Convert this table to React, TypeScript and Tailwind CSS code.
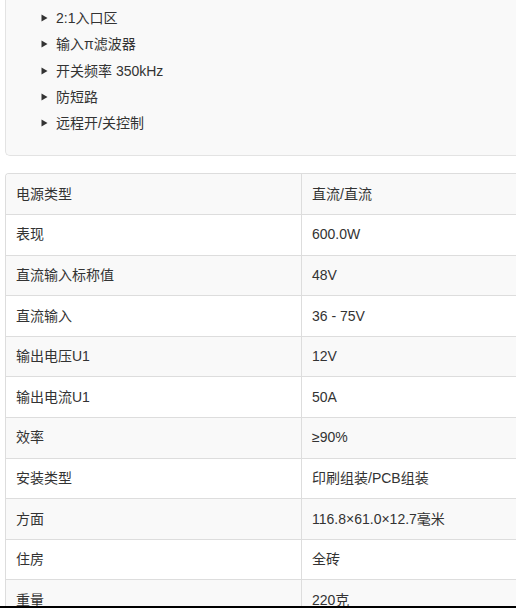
const features = ["2:1入口区", "输入π滤波器", "开关频率 350kHz", "防短路", "远程开/关控制"];

const specs: [string, string][] = [
  ["电源类型", "直流/直流"],
  ["表现", "600.0W"],
  ["直流输入标称值", "48V"],
  ["直流输入", "36 - 75V"],
  ["输出电压U1", "12V"],
  ["输出电流U1", "50A"],
  ["效率", "≥90%"],
  ["安装类型", "印刷组装/PCB组装"],
  ["方面", "116.8×61.0×12.7毫米"],
  ["住房", "全砖"],
  ["重量", "220克"],
];

function Arrow() {
  return (
    <svg width="7" height="8" viewBox="0 0 7 8" className="shrink-0">
      <path d="M0.5 0.5 L6.5 4 L0.5 7.5 Z" fill="#333" />
    </svg>
  );
}

export default function App() {
  return (
    <div
      className="w-[516px] h-[608px] overflow-hidden bg-white flex flex-col text-[14px] text-[#333]"
      style={{ fontFamily: '"Liberation Sans", Arial, "Noto Sans CJK SC", sans-serif' }}
    >
      <div className="h-[606px] overflow-hidden pl-[5px]">
        {/* feature box */}
        <div className="w-[560px] bg-[#f9f9f9] border-l border-b border-[#e3e3e3] rounded-bl-[5px] pt-[5px] pb-[19px]">
          <ul className="pl-[35px]">
            {features.map((f) => (
              <li key={f} className="h-[26.3px] flex items-center gap-[8px] leading-[20px]">
                <Arrow />
                <span>{f}</span>
              </li>
            ))}
          </ul>
        </div>

        {/* spec table */}
        <div className="mt-[17px] w-[560px] border-l border-t border-[#ddd] rounded-tl-[4px] overflow-hidden">
          {specs.map(([k, v], i) => (
            <div
              key={k}
              className={`flex h-[40.6px] border-b border-[#ddd] ${i % 2 === 0 ? "bg-[#f9f9f9]" : "bg-white"}`}
            >
              <div className="w-[296px] shrink-0 flex items-center px-[10px] border-r border-[#ddd]">{k}</div>
              <div className="flex-1 flex items-center px-[10px]">{v}</div>
            </div>
          ))}
        </div>
      </div>
      <div className="h-[2px] bg-black" />
    </div>
  );
}
